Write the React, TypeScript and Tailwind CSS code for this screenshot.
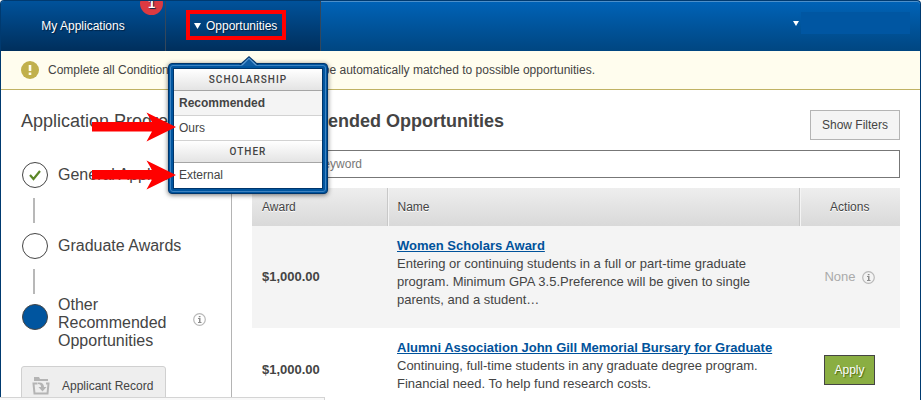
import type { ReactNode } from "react";

const steps = [
  { label: "General Application", state: "done" },
  { label: "Graduate Awards", state: "open" },
];

function InfoIcon() {
  return (
    <svg width="13" height="13" viewBox="0 0 13 13" className="shrink-0" aria-hidden="true">
      <circle cx="6.5" cy="6.5" r="5.8" fill="none" stroke="#b8b8b8" strokeWidth="1.2" />
      <path d="M5 5h2.500v4H8.500v1H5V9h1V6H5zM5.800 3h1.700v1.300H5.800z" fill="#8c8c8c" />
    </svg>
  );
}

function StepRow({ children, state }: { children: ReactNode; state: string }) {
  return (
    <li className="flex h-[26px] items-center gap-[10px]">
      <span className="flex size-[26px] shrink-0 items-center justify-center rounded-full border border-[#444] bg-white">
        {state === "done" && (
          <svg width="14" height="12" viewBox="0 0 14 12" aria-hidden="true">
            <path d="M2 6l3.500 4L12 2" fill="none" stroke="#5c8727" strokeWidth="2.2" />
          </svg>
        )}
      </span>
      <span className="whitespace-nowrap text-[16px] leading-[18px]">{children}</span>
    </li>
  );
}

function Connector() {
  return <li aria-hidden="true" className="my-[10px] ml-[11px] h-[25px] w-[2px] bg-[#b8b8b8]" />;
}

function MenuHeading({ children }: { children: ReactNode }) {
  return (
    <div className="h-[22px] border-b border-[#a5a5a5] bg-gradient-to-b from-white to-[#e4e4e4] text-center font-[Roboto,sans-serif] text-[10px] leading-[21px] font-medium tracking-[1px] text-[#444]">
      {children}
    </div>
  );
}

function OpportunitiesMenu() {
  return (
    <div className="absolute top-[63px] left-[168px] z-10 w-[160px] rounded-[4px] border border-[#00356b] bg-[#00559f] p-[1px] shadow-[0_1px_5px_rgba(0,0,0,0.55)]">
      <svg width="22" height="10" viewBox="0 0 22 10" className="absolute -top-[8px] left-[69px]" aria-hidden="true">
        <path d="M1 9L11 0l10 9z" fill="#00356b" />
        <path d="M3 9l8-7.500L19 9z" fill="#5a9bd5" />
        <path d="M4 10l7-7 7 7z" fill="#0e5ca3" />
      </svg>
      <div className="rounded-[3px] border border-[#3f83c1] p-[2px]">
        <div className="border border-[#00356b] bg-white text-[12px] leading-[24px]">
          <MenuHeading>SCHOLARSHIP</MenuHeading>
          <a href="#recommended" className="block h-[25px] border-b border-[#d2d2d2] bg-[#f4f4f4] px-[5px] font-bold">Recommended</a>
          <a href="#ours" className="block h-[25px] border-b border-[#d2d2d2] px-[5px]">Ours</a>
          <MenuHeading>OTHER</MenuHeading>
          <a href="#external" className="block h-[25px] px-[5px]">External</a>
        </div>
      </div>
    </div>
  );
}

function Arrow({ className }: { className: string }) {
  return (
    <svg width="84" height="30" viewBox="0 0 84 30" className={className} aria-hidden="true">
      <path d="M0 10h60L54.500 0.500 84 15 54.500 29.500 60 19.500H0z" fill="#f00" />
    </svg>
  );
}

const awards = [
  {
    amount: "$1,000.00",
    name: "Women Scholars Award",
    text: "Entering or continuing students in a full or part-time graduate program. Minimum GPA 3.5.Preference will be given to single parents, and a student…",
    open: false,
  },
  {
    amount: "$1,000.00",
    name: "Alumni Association John Gill Memorial Bursary for Graduate",
    text: "Continuing, full-time students in any graduate degree program. Financial need. To help fund research costs.",
    open: true,
  },
];

export default function App() {
  return (
    <div className="relative h-screen overflow-hidden bg-white font-['Liberation_Sans',Arial,sans-serif] text-[12px] text-[#444]">
      <nav className="flex h-[51px] overflow-hidden rounded-t-[4px] border-x border-t border-[#003a70] bg-gradient-to-b from-[#0063b8] to-[#004681] text-white inset-shadow-[0_1px_0_#4c8fca]">
        <a href="#applications" className="relative flex w-[165px] items-center justify-center border-r border-[#33475c] bg-gradient-to-b from-[#00529b] to-[#002f5c] [text-shadow:1px_1px_1px_#002040]">
          My Applications
          <span className="absolute -top-[9px] left-[139px] flex size-[23px] items-center justify-center rounded-full bg-[#dc3a41] text-[13px] font-bold">1</span>
        </a>
        <button type="button" aria-expanded="true" className="flex w-[155px] items-center gap-[5px] border-r border-[#33475c] bg-gradient-to-b from-[#00529b] to-[#002f5c] pl-[28px] [text-shadow:1px_1px_1px_#002040]">
          <svg width="7" height="6" viewBox="0 0 7 6" aria-hidden="true"><path d="M0 0h7L3.500 6z" fill="#fff" /></svg>
          Opportunities
        </button>
        <button type="button" aria-label="Account" className="mt-[11px] mr-[10px] ml-auto flex h-[22px] items-center gap-[2px]">
          <svg width="6" height="5" viewBox="0 0 6 5" aria-hidden="true"><path d="M0 0h6L3 5z" fill="#fff" /></svg>
          <span className="h-[22px] w-[109px] bg-[#0056a2]" />
        </button>
      </nav>

      <div className="border-x border-[#003a70]">
        <div className="flex h-[39px] items-center gap-[9px] border-b border-[#c0b264] bg-[#fffdee] pl-[20px] text-[#444]">
          <svg width="18" height="18" viewBox="0 0 18 18" aria-hidden="true">
            <circle cx="9" cy="9" r="9" fill="#c1b04c" />
            <path d="M7.700 4h2.600v6H7.700zM7.700 11.500h2.600V14H7.700z" fill="#fffdee" />
          </svg>
          <p>Complete all Conditional Applications and you shall be automatically matched to possible opportunities.</p>
        </div>

        <div className="flex">
          <aside className="w-[231px] shrink-0 border-r border-[#b4b4b4] pt-[20px] pl-[20px]">
            <h2 className="text-[18px] leading-[22px]">Application Progress</h2>
            <ol className="pt-[30px] pl-[1px]">
              <StepRow state={steps[0].state}>{steps[0].label}</StepRow>
              <Connector />
              <StepRow state={steps[1].state}>{steps[1].label}</StepRow>
              <Connector />
              <li className="-mt-[8px] flex items-start gap-[10px]">
                <span className="mt-[8px] size-[26px] shrink-0 rounded-full border border-[#444] bg-[#00559f]" />
                <span className="w-[125px] text-[16px] leading-[18px]">Other Recommended Opportunities</span>
                <span className="mt-[17px]"><InfoIcon /></span>
              </li>
            </ol>
            <button type="button" className="mt-[16px] flex h-[40px] w-[145px] items-center gap-[12px] rounded-[3px] border border-[#d0d0d0] bg-[#eee] pl-[10px]">
              <svg width="18" height="18" viewBox="0 0 18 18" aria-hidden="true">
                <path d="M2 0h5l1 2h8v2H2z" fill="#b4b4b4" />
                <path d="M5.500 6.500H1.500L2.500 16.500h13l1-10H14" fill="none" stroke="#b4b4b4" strokeWidth="2" />
                <path d="M6 5.500c4-.5 6 1.500 6 4.500h2.500L10.500 14.500 6.500 10H9c0-2-1-3-3-3z" fill="#b4b4b4" />
              </svg>
              Applicant Record
            </button>
          </aside>

          <main className="min-w-0 flex-1 pt-[20px] pr-[20px] pl-[20px]">
            <div className="flex items-start justify-between">
              <h1 className="text-[18px] leading-[22px] font-bold">Recommended Opportunities</h1>
              <button type="button" className="h-[30px] w-[90px] border border-[#b4b4b4] bg-[#f4f4f4]">Show Filters</button>
            </div>
            <input type="search" aria-label="Search by keyword" placeholder="Search by keyword" className="mt-[10px] block h-[28px] w-full border border-[#777] px-[7px] placeholder:text-[#777]" />
            <table className="mt-[10px] w-full table-fixed border-collapse">
              <thead>
                <tr className="h-[38px] bg-gradient-to-b from-[#eee] to-[#d9d9d9] text-left [text-shadow:0_1px_0_#fff]">
                  <th scope="col" className="w-[135px] border-r border-[#c8c8c8] px-[10px] font-normal">Award</th>
                  <th scope="col" className="border-r border-[#c8c8c8] px-[10px] font-normal inset-shadow-[1px_0_0_#f4f4f4]">Name</th>
                  <th scope="col" className="w-[101px] text-center font-normal inset-shadow-[1px_0_0_#f4f4f4]">Actions</th>
                </tr>
              </thead>
              <tbody className="text-[13px]">
                {awards.map((a) => (
                  <tr key={a.name} className="odd:bg-[#f4f4f4]">
                    <td className="px-[10px] font-bold">{a.amount}</td>
                    <td className="pt-[11px] pr-[20px] pb-[19px] pl-[10px] leading-[18px]">
                      <a href="#award" className="block font-bold text-[#00529b] underline">{a.name}</a>
                      <p>{a.text}</p>
                    </td>
                    <td className="text-center">
                      {a.open ? (
                        <button type="button" className="h-[30px] w-[51px] border border-[#444] bg-[#8aae42] text-[12px] text-white [text-shadow:1px_1px_1px_#4a6a10]">Apply</button>
                      ) : (
                        <span className="flex items-center justify-center gap-[6px] text-[#aaa]">None <InfoIcon /></span>
                      )}
                    </td>
                  </tr>
                ))}
              </tbody>
            </table>
          </main>
        </div>
      </div>

      <OpportunitiesMenu />
      <div className="absolute top-[10px] left-[186px] z-20 h-[30px] w-[100px] border-4 border-[#f00]" />
      <Arrow className="absolute top-[112px] left-[92px] z-20" />
      <Arrow className="absolute top-[160px] left-[92px] z-20" />
      <div className="fixed bottom-0 left-0 z-20 h-[3px] w-[325px] border-t border-r border-[#d4d4d4] bg-[#f8f8f8]" />
    </div>
  );
}
